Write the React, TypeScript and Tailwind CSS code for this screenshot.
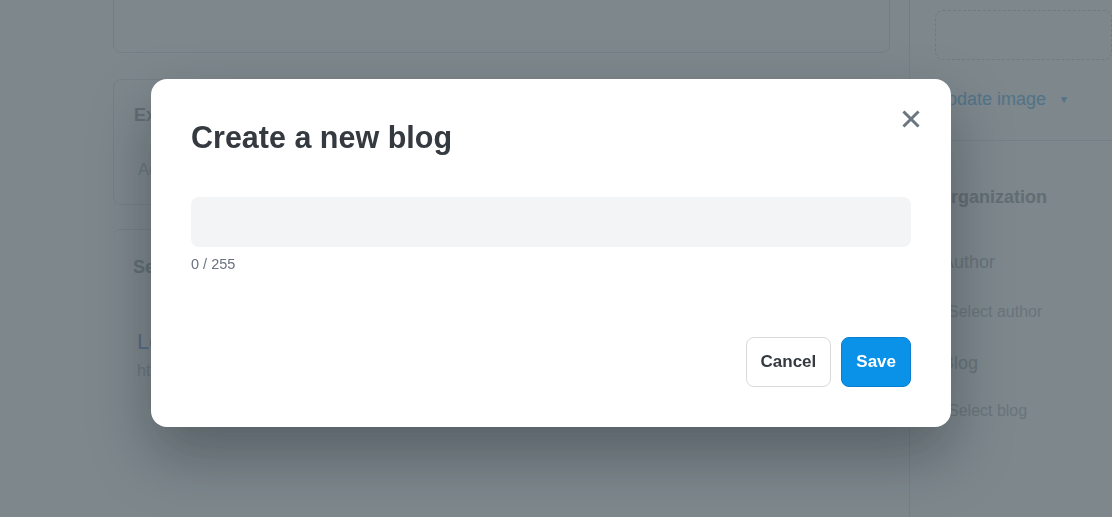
import React from 'react'

function BackgroundPage() {
  return (
    <div className='flex min-h-[517px] w-full bg-white pl-[113px] font-["Liberation_Sans",Arial,sans-serif]'>
      {/* main column */}
      <div className='flex w-[777px] flex-col'>
        <div className='mt-[-20px] h-[73px] rounded-lg border border-[#eceef0] bg-white' />
        <div className='mt-[26px] h-[126px] rounded-lg border border-[#eceef0] bg-white px-5 pt-[22px]'>
          <p className='text-[18px] font-bold text-[#c3c6c8]'>Excerpt</p>
          <p className='ml-[4px] mt-[28px] text-[17px] text-[#d6d9dc]'>Add a short summary</p>
        </div>
        <div className='mt-[24px] h-[220px] rounded-lg border-t border-[#eceef0] bg-white px-5 pt-[24px]'>
          <p className='text-[18px] font-bold text-[#c3c6c8]'>Search engine listing</p>
          <p className='ml-[4px] mt-[44px] text-[22px] text-[#b4c0ea]'>Lorem ipsum</p>
          <p className='ml-[4px] mt-[1px] text-[16px] text-[#d6d9dc]'>https://example.com/blogs</p>
        </div>
      </div>
      {/* side column */}
      <div className='ml-[19px] flex flex-1 flex-col border-l border-[#eceef0]'>
        <div className='ml-[25px] mt-[10px] h-[50px] rounded-lg border border-dashed border-[#e2e4e6]' />
        <div className='ml-[24px] mt-[26px] flex items-center gap-[13px] text-[18px] text-[#9fd2f5]'>
          <span>Update image</span>
          <span className='text-[10px]'>▼</span>
        </div>
        <div className='mt-[27px] border-t border-[#eceef0] pl-[27px] pt-[43px] text-[#c3c6c8]'>
          <p className='text-[18px] font-bold'>Organization</p>
          <p className='ml-[5px] mt-[38px] text-[18px] text-[#cdd1d4]'>Author</p>
          <p className='ml-[11px] mt-[24px] text-[16px] text-[#d3d6d9]'>Select author</p>
          <p className='ml-[5px] mt-[26px] text-[18px] text-[#cdd1d4]'>Blog</p>
          <p className='ml-[11px] mt-[22px] text-[16px] text-[#d3d6d9]'>Select blog</p>
        </div>
      </div>
    </div>
  )
}

function CreateBlogModal() {
  return (
    <div className='fixed inset-0 bg-[rgba(18,36,46,0.55)] font-["Liberation_Sans",Arial,sans-serif]'>
      <div className='ml-[151px] mt-[79px] w-[800px] rounded-2xl bg-white px-10 pb-10 pt-[38px] shadow-[0_28px_60px_rgba(15,23,30,0.35)]'>
        <div className='flex items-start justify-between'>
          <h2 className='text-[30.5px] font-bold leading-[40px] text-[#343a40]'>Create a new blog</h2>
          <button className='mr-[-12px] mt-[-10px] flex h-6 w-6 items-center justify-center text-[#6b7680]'>
            <svg width='18' height='18' viewBox='0 0 18 18' fill='none' stroke='currentColor' strokeWidth='3' strokeLinecap='square'>
              <path d='M2.5 2.5L15.5 15.5M15.5 2.5L2.5 15.5' />
            </svg>
          </button>
        </div>
        <input
          className='mt-[40px] block h-[50px] w-full rounded-lg bg-[#f3f4f6] px-4 text-[16px] outline-none'
          maxLength={255}
        />
        <p className='mt-[7px] text-[14.5px] text-[#6b7280]'>0 / 255</p>
        <div className='mt-[61px] flex justify-end gap-[10px]'>
          <button className='h-[50px] rounded-lg border border-[#d7dadd] bg-white px-[14px] text-[17px] font-bold text-[#343a40]'>
            Cancel
          </button>
          <button className='h-[50px] rounded-lg border border-[#0a7fd0] bg-[#0a91e8] px-[14px] text-[17px] font-bold text-white'>
            Save
          </button>
        </div>
      </div>
    </div>
  )
}

export default function App() {
  return (
    <div className='relative h-[517px] w-[1112px] overflow-hidden'>
      <BackgroundPage />
      <CreateBlogModal />
    </div>
  )
}
